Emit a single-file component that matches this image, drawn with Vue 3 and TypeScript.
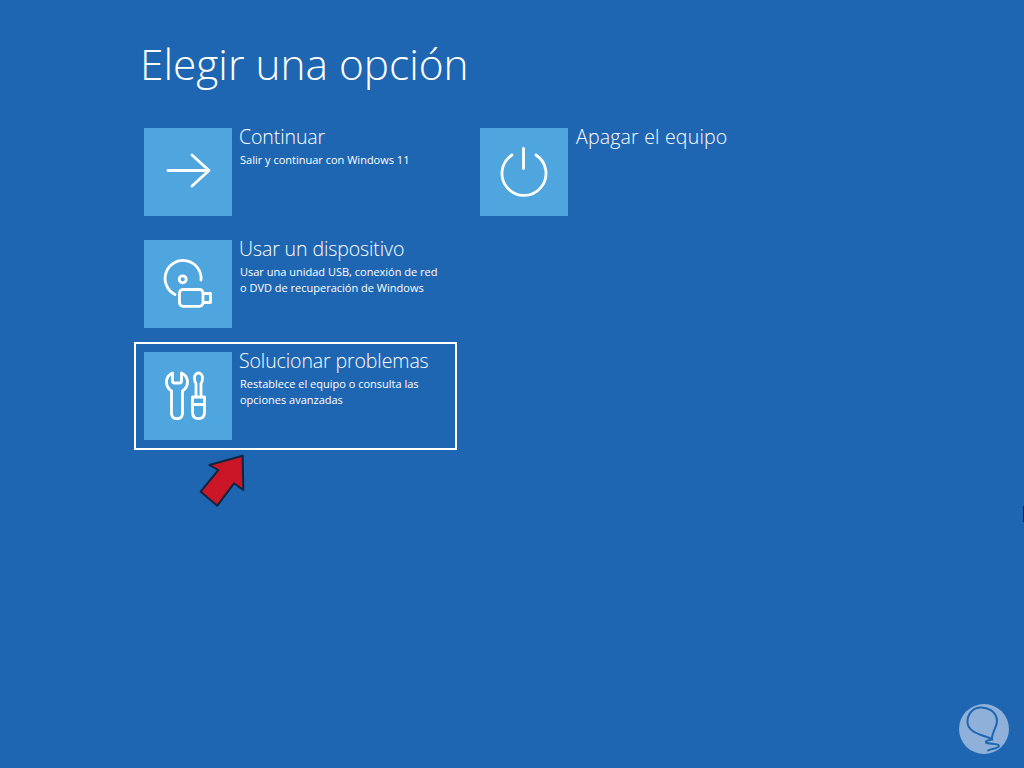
<template>
  <div class="screen">
    <h1 class="title">Elegir una opción</h1>

    <div class="options">
      <div class="col">
        <button v-for="opt in leftOptions" :key="opt.name" class="option" :class="{ focused: opt.focused }">
          <span class="tile">
            <svg v-if="opt.icon === 'arrow'" viewBox="0 0 88 88" class="icon">
              <path d="M24 42.500H65M48 27L65 42.500L48 58" />
            </svg>
            <svg v-else-if="opt.icon === 'device'" viewBox="0 0 88 88" class="icon">
              <path d="M31 54.500A18 18 0 1 1 57 40" />
              <circle cx="38.700" cy="39.300" r="3.500" />
              <rect x="35.500" y="49.500" width="23.500" height="16.800" rx="3.500" />
              <path d="M60 53.500H66.500V62.500H60" />
            </svg>
            <svg v-else viewBox="0 0 88 88" class="icon">
              <path d="M28.500 21V29Q28.500 31 30.500 31H35.500Q37.500 31 37.500 29V21C41 22 43.500 26 43.500 30C43.500 34 41.500 37 38.500 39V61C38.500 64.500 36.500 66.700 33 66.700C29.500 66.700 27.500 64.500 27.500 61V39C24.500 37 22.500 34 22.500 30C22.500 26 25 22 28.500 21Z" />
              <path d="M48.500 45H60.500V60C60.500 64.500 58 66.700 54.500 66.700C51 66.700 48.500 64.500 48.500 60ZM48.500 52.500H60.500" />
              <path d="M52 45V31.500C51 30.500 50.500 28.500 50.500 26C50.500 23 52.500 21 54.500 21C56.500 21 58.500 23 58.500 26C58.500 28.500 58 30.500 57 31.500V45" />
            </svg>
          </span>
          <span class="text">
            <span class="name">{{ opt.name }}</span>
            <span v-for="line in opt.lines" :key="line" class="desc">{{ line }}</span>
          </span>
        </button>
      </div>
      <div class="col">
        <button class="option">
          <span class="tile">
            <svg viewBox="0 0 88 88" class="icon">
              <path d="M43.500 20.500V40.500" />
              <path d="M32 27A22 22 0 1 0 56 27" />
            </svg>
          </span>
          <span class="text">
            <span class="name wide">Apagar el equipo</span>
          </span>
        </button>
      </div>
    </div>

    <!-- annotation arrow over the screenshot -->
    <svg class="pointer" viewBox="0 0 48 58" width="48" height="58">
      <path d="M43.700 2.700L44.300 37L35 30.300L18.300 52.700L1.700 38.700L19.300 17L10.300 12Z" fill="#cb1628" stroke="#10243f" stroke-width="2" stroke-linejoin="round" />
    </svg>

    <svg class="logo" viewBox="0 0 50 50" width="50" height="50">
      <circle cx="25" cy="25" r="25" fill="#8fb0d8" />
      <path d="M33 34.500C33 28 38.500 22 38 16C37 7 28 3 21 3.500C13 4 8 11 8.500 19C9 26 16 29 22 31C26 32.500 31 33.500 33 35.500C30 36 26 37 27 38.500C29 40.500 40 39 40 42C40 44.500 32 44.500 29 46.500" fill="none" stroke="#1f66b2" stroke-width="2" stroke-linecap="round" />
    </svg>

    <span class="edge"></span>
  </div>
</template>

<script setup lang="ts">
interface Option {
  name: string
  lines: string[]
  icon: string
  focused?: boolean
}

const leftOptions: Option[] = [
  { name: 'Continuar', lines: ['Salir y continuar con Windows 11'], icon: 'arrow' },
  {
    name: 'Usar un dispositivo',
    lines: ['Usar una unidad USB, conexión de red', 'o DVD de recuperación de Windows'],
    icon: 'device'
  },
  {
    name: 'Solucionar problemas',
    lines: ['Restablece el equipo o consulta las', 'opciones avanzadas'],
    icon: 'tools',
    focused: true
  }
]
</script>

<style>
html,
body {
  margin: 0;
  background: #1f66b2;
}
</style>

<style scoped>
.screen {
  position: relative;
  width: 1024px;
  height: 768px;
  overflow: hidden;
  box-sizing: border-box;
  padding: 34px 0 0 134px;
  background: #1f66b2;
  color: #fff;
  font-family: "Open Sans", "Liberation Sans", sans-serif;
}

.title {
  margin: 0 0 24px 6px;
  font-size: 42.400px;
  line-height: 60px;
  font-weight: 300;
  white-space: nowrap;
}

.options {
  display: flex;
  gap: 13px;
}

.col {
  display: flex;
  flex-direction: column;
  gap: 4px;
}

.option {
  display: flex;
  gap: 7px;
  box-sizing: border-box;
  width: 323px;
  height: 108px;
  padding: 8px;
  border: 2px solid transparent;
  background: none;
  color: inherit;
  font: inherit;
  text-align: left;
}

.option.focused {
  border-color: #fff;
}

.tile {
  flex: none;
  width: 88px;
  height: 88px;
  background: #4fa6de;
}

.icon {
  display: block;
  width: 88px;
  height: 88px;
  fill: none;
  stroke: #fff;
  stroke-width: 2.800;
  stroke-linecap: round;
  stroke-linejoin: round;
}

.text {
  display: flex;
  flex-direction: column;
  min-width: 0;
}

.name {
  font-size: 19.500px;
  line-height: 20px;
  font-weight: 300;
  letter-spacing: -0.1px;
  margin-bottom: 5px;
  margin-top: -1px;
  white-space: nowrap;
}

.name.wide {
  margin-left: 1px;
  letter-spacing: 0.2px;
}

.desc {
  font-size: 11px;
  line-height: 16px;
  margin-left: 1px;
  white-space: nowrap;
}

.pointer {
  position: absolute;
  left: 199px;
  top: 453px;
}

.logo {
  position: absolute;
  left: 959px;
  top: 704px;
}

.edge {
  position: absolute;
  right: 0;
  top: 506px;
  width: 1px;
  height: 16px;
  background: #0b1a2c;
}
</style>
